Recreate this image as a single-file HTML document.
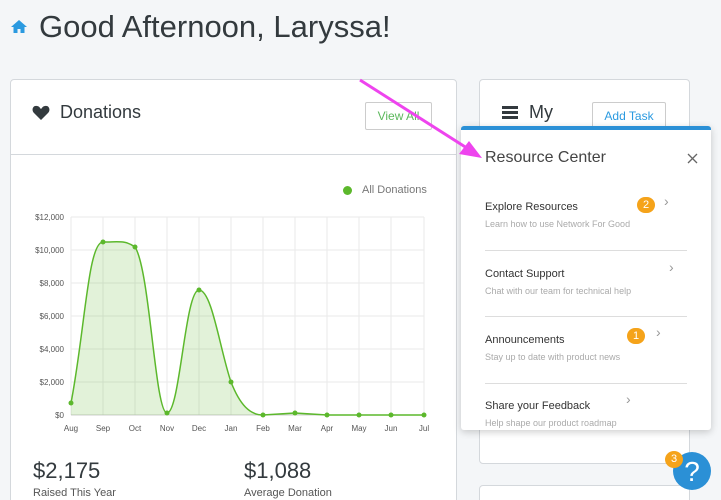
<!DOCTYPE html>
<html><head><style>
html,body{margin:0;width:721px;height:500px;overflow:hidden}
body{background:#f4f6f8;font-family:"Liberation Sans",sans-serif;position:relative;color:#333a3e}
.abs{position:absolute}
.card{position:absolute;background:#fff;border:1px solid #d4d8dc;border-radius:4px}
.btn{position:absolute;background:#fff;border:1px solid #ccc;border-radius:2px;font-size:12px;text-align:center}
.rc{position:absolute;left:461px;top:126px;width:250px;height:300px;background:#fff;border-top:4px solid #2b90d6;box-shadow:0 2px 8px rgba(0,0,0,.2);border-radius:3px}
.item{position:absolute;left:24px;width:202px}
.item b{font-weight:normal;font-size:11px;color:#333;display:block}
.item span{font-size:9px;color:#aaa;display:block;margin-top:6px}
.sep{position:absolute;left:24px;width:202px;height:1px;background:#ddd}
.badge{position:absolute;width:18px;height:16px;border-radius:8px;background:#f5a31a;color:#fff;font-size:11px;text-align:center;line-height:16px}
.chev{position:absolute;color:#999;font-size:14px}
</style></head><body>
<svg class="abs" style="left:10px;top:19px" width="18" height="15" viewBox="0 0 18 15"><path d="M9 1L1 8h2.5v6h4v-4h3v4h4V8H17z" fill="#2b9ae0"/></svg>
<div class="abs" style="left:39px;top:9px;font-size:31px;color:#333a3e">Good Afternoon, Laryssa!</div>

<div class="card" style="left:10px;top:79px;width:445px;height:440px"></div>
<div class="abs" style="left:10px;top:154px;width:446px;height:1px;background:#d4d8dc"></div>
<svg class="abs" style="left:32px;top:105px" width="18" height="16" viewBox="0 0 18 16"><path d="M9 15L2 8C-1 5 1 0 5 1c2 0 3 2 4 3 1-1 2-3 4-3 4-1 6 4 3 7z" fill="#333a3e"/></svg>
<div class="abs" style="left:60px;top:102px;font-size:18px">Donations</div>
<div class="btn" style="left:365px;top:102px;width:65px;height:26px;line-height:26px;color:#5cb85c">View All</div>
<div class="abs" style="left:343px;top:186px;width:9px;height:9px;border-radius:50%;background:#5cb82c"></div>
<div class="abs" style="left:362px;top:184px;font-size:11px;color:#777">All Donations</div>

<svg class="abs" style="left:0;top:200px" width="460" height="240" viewBox="0 200 460 240" font-family="Liberation Sans" font-size="8" fill="#555">
<g stroke="#eaeaea" stroke-width="1">
<line x1="71" y1="217" x2="424" y2="217"/><line x1="71" y1="250" x2="424" y2="250"/><line x1="71" y1="283" x2="424" y2="283"/><line x1="71" y1="316" x2="424" y2="316"/><line x1="71" y1="349" x2="424" y2="349"/><line x1="71" y1="382" x2="424" y2="382"/>
<line x1="71" y1="217" x2="71" y2="415"/><line x1="103" y1="217" x2="103" y2="415"/><line x1="135" y1="217" x2="135" y2="415"/><line x1="167" y1="217" x2="167" y2="415"/><line x1="199" y1="217" x2="199" y2="415"/><line x1="231" y1="217" x2="231" y2="415"/><line x1="263" y1="217" x2="263" y2="415"/><line x1="295" y1="217" x2="295" y2="415"/><line x1="327" y1="217" x2="327" y2="415"/><line x1="359" y1="217" x2="359" y2="415"/><line x1="391" y1="217" x2="391" y2="415"/><line x1="424" y1="217" x2="424" y2="415"/>
</g>
<line x1="71" y1="415" x2="424" y2="415" stroke="#ccc"/>
<g text-anchor="end"><text x="64" y="220">$12,000</text><text x="64" y="253">$10,000</text><text x="64" y="286">$8,000</text><text x="64" y="319">$6,000</text><text x="64" y="352">$4,000</text><text x="64" y="385">$2,000</text><text x="64" y="418">$0</text></g>
<g text-anchor="middle"><text x="71" y="431">Aug</text><text x="103" y="431">Sep</text><text x="135" y="431">Oct</text><text x="167" y="431">Nov</text><text x="199" y="431">Dec</text><text x="231" y="431">Jan</text><text x="263" y="431">Feb</text><text x="295" y="431">Mar</text><text x="327" y="431">Apr</text><text x="359" y="431">May</text><text x="391" y="431">Jun</text><text x="424" y="431">Jul</text></g>
<path d="M71 403C85 330 88 242 103 242C120 242 125 240 135 247C150 270 155 413 167 413C180 413 185 290 199 290C212 290 220 350 231 382C240 405 250 415 263 415L295 413L327 415L424 415L424 415L71 415Z" fill="#5cb82c" fill-opacity=".18"/>
<path d="M71 403C85 330 88 242 103 242C120 242 125 240 135 247C150 270 155 413 167 413C180 413 185 290 199 290C212 290 220 350 231 382C240 405 250 415 263 415L295 413L327 415L424 415" fill="none" stroke="#5cb82c" stroke-width="1.5"/>
<g fill="#5cb82c"><circle cx="71" cy="403" r="2.5"/><circle cx="103" cy="242" r="2.5"/><circle cx="135" cy="247" r="2.5"/><circle cx="167" cy="413" r="2.5"/><circle cx="199" cy="290" r="2.5"/><circle cx="231" cy="382" r="2.5"/><circle cx="263" cy="415" r="2.5"/><circle cx="295" cy="413" r="2.5"/><circle cx="327" cy="415" r="2.5"/><circle cx="359" cy="415" r="2.5"/><circle cx="391" cy="415" r="2.5"/><circle cx="424" cy="415" r="2.5"/></g>
</svg>
<div class="abs" style="left:33px;top:458px;font-size:22px">$2,175</div>
<div class="abs" style="left:33px;top:487px;font-size:11px;color:#555">Raised This Year</div>
<div class="abs" style="left:244px;top:458px;font-size:22px">$1,088</div>
<div class="abs" style="left:244px;top:487px;font-size:11px;color:#555">Average Donation</div>

<div class="card" style="left:479px;top:79px;width:209px;height:383px"></div>
<div class="card" style="left:479px;top:485px;width:209px;height:40px"></div>
<svg class="abs" style="left:502px;top:106px" width="16" height="13"><rect y="0" width="16" height="3" fill="#333a3e"/><rect y="5" width="16" height="3" fill="#333a3e"/><rect y="10" width="16" height="3" fill="#333a3e"/></svg>
<div class="abs" style="left:529px;top:102px;font-size:18px">My</div>
<div class="btn" style="left:592px;top:102px;width:72px;height:26px;line-height:26px;color:#2b9ae0">Add Task</div>

<div class="rc">
<div class="abs" style="left:24px;top:19px;font-size:16px;color:#444">Resource Center</div>
<svg class="abs" style="left:226px;top:23px" width="11" height="11"><path d="M1 1L10 10M10 1L1 10" stroke="#666" stroke-width="1.3"/></svg>
<div class="item" style="top:71px"><b>Explore Resources</b><span>Learn how to use Network For Good</span></div>
<div class="badge" style="left:176px;top:67px">2</div><div class="chev" style="left:203px;top:63px">›</div>
<div class="sep" style="top:120px"></div>
<div class="item" style="top:138px"><b>Contact Support</b><span>Chat with our team for technical help</span></div>
<div class="chev" style="left:208px;top:129px">›</div>
<div class="sep" style="top:186px"></div>
<div class="item" style="top:204px"><b>Announcements</b><span>Stay up to date with product news</span></div>
<div class="badge" style="left:166px;top:198px">1</div><div class="chev" style="left:195px;top:194px">›</div>
<div class="sep" style="top:253px"></div>
<div class="item" style="top:270px"><b>Share your Feedback</b><span>Help shape our product roadmap</span></div>
<div class="chev" style="left:165px;top:261px">›</div>
</div>

<div class="abs" style="left:673px;top:452px;width:38px;height:38px;border-radius:50%;background:#2b90d6;color:#fff;font-size:28px;text-align:center;line-height:40px">?</div>
<div class="abs" style="left:665px;top:451px;width:18px;height:17px;border-radius:50%;background:#f5a31a;color:#fff;font-size:11px;text-align:center;line-height:17px">3</div>

<svg class="abs" style="left:0;top:0" width="721" height="500"><line x1="360" y1="80" x2="470" y2="150" stroke="#ee44ee" stroke-width="3"/><path d="M482 158L459 154L469 141Z" fill="#ee44ee"/></svg>
</body></html>
